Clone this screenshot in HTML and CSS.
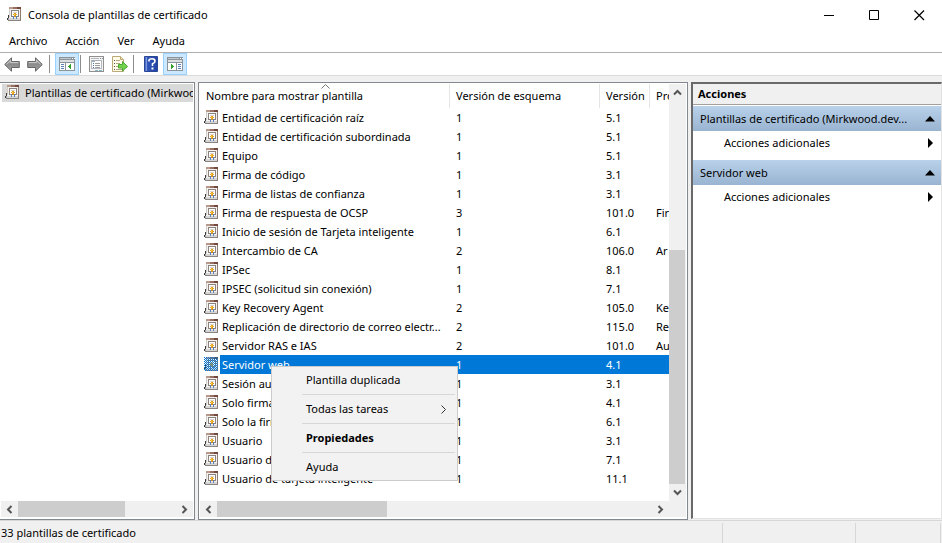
FILE: index.html
```html
<!DOCTYPE html>
<html lang="es">
<head>
<meta charset="utf-8">
<title>Consola de plantillas de certificado</title>
<link rel="stylesheet" href="styles.css">
</head>
<body>
<svg class="defs" aria-hidden="true">
  <defs>
    <linearGradient id="grey" x1="0" x2="0" y1="0" y2="1"><stop offset="0" stop-color="#b4b4b4"/><stop offset=".5" stop-color="#8c8c8c"/><stop offset="1" stop-color="#a4a4a4"/></linearGradient>
    <linearGradient id="blue" x1="0" x2="1" y1="0" y2="0"><stop offset="0" stop-color="#5b7bd0"/><stop offset=".25" stop-color="#2f54b8"/><stop offset="1" stop-color="#2444a4"/></linearGradient>
    <symbol id="cert" viewBox="0 0 14 14">
      <path d="M2 1h11v12H2z" fill="#f3f2f1"/>
      <path d="M2 0h4v2H2z" fill="#b8998c"/>
      <path d="M6 0h4v2H6z" fill="#977063"/>
      <path d="M10 0h4v2h-4z" fill="#74493d"/>
      <path d="M13 2h1v12h-1z" fill="#8d7b74"/>
      <path d="M2 2h1v8H2z" fill="#d2ccc9"/>
      <path d="M1 13h13v1H1z" fill="#8a8481"/>
      <path d="M2 11h11v2H2z" fill="#d5d5d5"/>
      <path d="M1 8h1v3H1zM0 11h1v2H0z" fill="#3c3c3c"/>
      <path d="M1 11h1v2H1z" fill="#a8a8a8"/>
      <path d="M4 3h8v1H4zM4 4h1v6H4zM11 4h1v6h-1zM5 9h6v1H5z" fill="#8b827e"/>
      <path d="M5 4h6v5H5z" fill="#fff"/>
      <path d="M6 5h4v1H6z" fill="#d8d2ce"/>
      <path d="M7 6h2v3H7zM6 7h4v1H6z" fill="#e5a21c"/>
      <path d="M7 7h1v1H7z" fill="#ffd65c"/>
      <path d="M6 9h1v3H6zM9 9h1v3H9z" fill="#5c7fb8"/>
      <path d="M7 9h2v1H7z" fill="#c58c25"/>
    </symbol>
    <symbol id="stipple" viewBox="0 0 14 14">
      <g fill="none" stroke="#0078d7" stroke-dasharray="1 1">
        <path d="M0 .5h14M0 2.500h14M0 4.500h14M0 6.500h14M0 8.500h14M0 10.500h14M0 12.500h14"/>
        <path d="M1 1.500h13M1 3.500h13M1 5.500h13M1 7.500h13M1 9.500h13M1 11.500h13M1 13.500h13"/>
      </g>
    </symbol>
    <symbol id="arrow" viewBox="0 0 16 15">
      <path d="M.7 7.500 7.500.8v3.700h7.800v6H7.500v3.700z" fill="url(#grey)" stroke="#666" stroke-width="1"/>
      <path d="M2.300 7.500 6.600 3.200v2.300h7.600" fill="none" stroke="#c8c8c8"/>
    </symbol>
    <symbol id="chev" viewBox="0 0 9 9">
      <path d="M6.500 1 3 4.500 6.500 8" fill="none" stroke="#555" stroke-width="2"/>
    </symbol>
  </defs>
</svg>
<div class="window">
  <header class="titlebar">
    <svg class="cert"><use href="#cert"/></svg>
    <h1>Consola de plantillas de certificado</h1>
    <div class="caption">
      <button aria-label="Minimizar"><svg width="11" height="11"><path d="M0 5.500h10" stroke="#000"/></svg></button>
      <button aria-label="Maximizar"><svg width="11" height="11"><path d="M.5.500h9v9h-9z" fill="none" stroke="#000"/></svg></button>
      <button aria-label="Cerrar"><svg width="11" height="11"><path d="M.5.500l9.500 9.500M10 .500.500 10" stroke="#000" stroke-width="1.200"/></svg></button>
    </div>
  </header>
  <nav class="menubar">
    <button>Archivo</button><button>Acción</button><button>Ver</button><button>Ayuda</button>
  </nav>
  <div class="toolbar">
    <button class="tool" aria-label="Atrás"><svg width="16" height="15"><use href="#arrow"/></svg></button>
    <button class="tool" aria-label="Adelante"><svg class="flip" width="16" height="15"><use href="#arrow"/></svg></button>
    <span class="sep"></span>
    <button class="tool on" aria-label="Mostrar u ocultar árbol de consola"><svg width="16" height="14" shape-rendering="crispEdges">
      <path d="M0 0h16v14H0z" fill="#8c949b"/><path d="M1 1h11v1H1z" fill="#c3c8cc"/><path d="M13 1h1v1h-1zM15 1h1v1h-1z" fill="#fff"/><path d="M1 3h14v2H1z" fill="#dde0e2"/><path d="M1 6h5v7H1zM7 6h8v7H7z" fill="#fff"/><path d="M2 7h3v1H2zM2 9h3v1H2zM2 11h3v1H2z" fill="#5c80b5"/><path d="M12 7v5h-1v-1h-1v-1H9V9h1V8h1V7z" fill="#33a02c"/></svg></button>
    <span class="sep"></span>
    <button class="tool" aria-label="Propiedades"><svg width="16" height="16" shape-rendering="crispEdges">
      <path d="M.5.500h14v15H.5z" fill="#f4f4f4" stroke="#909090"/><path d="M2 2h8v1H2z" fill="#b8b8b8"/><path d="M11 2h1v1h-1zM13 2h1v1h-1z" fill="#888"/><path d="M2.500 4.500h10v8h-10z" fill="#fff" stroke="#b5b9bd"/><path d="M3 4h3v2H3zM7 4h3v1H7z" fill="#a3adb8"/><path d="M4 7h1v1H4zM4 9h1v1H4zM4 11h1v1H4z" fill="#4b73ad"/><path d="M6 7h5v1H6zM6 9h5v1H6zM6 11h5v1H6z" fill="#9b9b9b"/><path d="M6 14h3v1H6zM10 14h3v1h-3z" fill="#85b9c9"/></svg></button>
    <button class="tool" aria-label="Exportar lista"><svg width="17" height="16">
      <path d="M1.500.500h8l3 3v12h-11z" fill="#fffbe6" stroke="#b9aa78"/><path d="M9.500.500v3h3" fill="#eee0aa" stroke="#b9aa78"/><path d="M3 4h1v1H3zM3 7h1v1H3zM3 10h1v1H3zM3 13h1v1H3z" fill="#555"/><path d="M5 4h4v1H5zM5 7h4v1H5zM5 10h3v1H5zM5 13h6v1H5z" fill="#b0a783"/><path d="M7.500 8.500h4v-3l5 5-5 4.500v-3h-4z" fill="#72d34c" stroke="#49a832"/></svg></button>
    <span class="sep"></span>
    <button class="tool help" aria-label="Ayuda"><svg width="14" height="16">
      <path d="M.5.500h13v15H.5z" fill="url(#blue)" stroke="#2a4796"/><path d="M2.500 1v14" stroke="#7d99de"/><path d="M5 5.500V4Q5.500 2.800 8 2.800 11 2.800 11 5.200 11 6.700 8.500 7.800V10" fill="none" stroke="#fff" stroke-width="1.600"/><path d="M7.500 11.500h2v2h-2z" fill="#fff"/></svg></button>
    <button class="tool on" aria-label="Mostrar u ocultar panel de acciones"><svg width="16" height="14" shape-rendering="crispEdges">
      <path d="M0 0h16v14H0z" fill="#8c949b"/><path d="M1 1h11v1H1z" fill="#c3c8cc"/><path d="M13 1h1v1h-1zM15 1h1v1h-1z" fill="#fff"/><path d="M1 3h14v2H1z" fill="#dde0e2"/><path d="M1 6h8v7H1zM10 6h5v7h-5z" fill="#fff"/><path d="M11 7h3v1h-3zM11 9h3v1h-3zM11 11h3v1h-3z" fill="#5c80b5"/><path d="M4 7v5h1v-1h1v-1h1V9H6V8H5V7z" fill="#33a02c"/></svg></button>
  </div>
  <main class="panes">
    <section class="pane tree">
      <div class="content"><a class="node" href="#lista"><svg class="cert"><use href="#cert"/></svg><span>Plantillas de certificado (Mirkwood)</span></a></div>
      <div class="hbar"><button aria-label="Izquierda"><svg width="9" height="9"><use href="#chev"/></svg></button><div class="track"><i class="thumb"></i></div><button aria-label="Derecha"><svg class="flip" width="9" height="9"><use href="#chev"/></svg></button></div>
    </section>
    <section class="pane list" id="lista">
      <div class="content">
        <table>
          <colgroup><col class="c1"><col class="c2"><col class="c3"><col></colgroup>
          <thead><tr><th>Nombre para mostrar plantilla<svg class="sort" width="9" height="5"><path d="M.5 4.500l4-4 4 4" fill="none" stroke="#777"/></svg></th><th>Versión de esquema</th><th>Versión</th><th>Pro</th></tr></thead>
          <tbody>
            <tr><td><svg class="cert"><use href="#cert"/></svg><span>Entidad de certificación raíz</span></td><td>1</td><td>5.1</td><td></td></tr>
            <tr><td><svg class="cert"><use href="#cert"/></svg><span>Entidad de certificación subordinada</span></td><td>1</td><td>5.1</td><td></td></tr>
            <tr><td><svg class="cert"><use href="#cert"/></svg><span>Equipo</span></td><td>1</td><td>5.1</td><td></td></tr>
            <tr><td><svg class="cert"><use href="#cert"/></svg><span>Firma de código</span></td><td>1</td><td>3.1</td><td></td></tr>
            <tr><td><svg class="cert"><use href="#cert"/></svg><span>Firma de listas de confianza</span></td><td>1</td><td>3.1</td><td></td></tr>
            <tr><td><svg class="cert"><use href="#cert"/></svg><span>Firma de respuesta de OCSP</span></td><td>3</td><td>101.0</td><td>Fir</td></tr>
            <tr><td><svg class="cert"><use href="#cert"/></svg><span>Inicio de sesión de Tarjeta inteligente</span></td><td>1</td><td>6.1</td><td></td></tr>
            <tr><td><svg class="cert"><use href="#cert"/></svg><span>Intercambio de CA</span></td><td>2</td><td>106.0</td><td>Ar</td></tr>
            <tr><td><svg class="cert"><use href="#cert"/></svg><span>IPSec</span></td><td>1</td><td>8.1</td><td></td></tr>
            <tr><td><svg class="cert"><use href="#cert"/></svg><span>IPSEC (solicitud sin conexión)</span></td><td>1</td><td>7.1</td><td></td></tr>
            <tr><td><svg class="cert"><use href="#cert"/></svg><span>Key Recovery Agent</span></td><td>2</td><td>105.0</td><td>Ke</td></tr>
            <tr><td><svg class="cert"><use href="#cert"/></svg><span>Replicación de directorio de correo electr...</span></td><td>2</td><td>115.0</td><td>Re</td></tr>
            <tr><td><svg class="cert"><use href="#cert"/></svg><span>Servidor RAS e IAS</span></td><td>2</td><td>101.0</td><td>Au</td></tr>
            <tr class="selected"><td><svg class="cert"><use href="#cert"/><use href="#stipple"/></svg><span>Servidor web</span></td><td>1</td><td>4.1</td><td></td></tr>
            <tr><td><svg class="cert"><use href="#cert"/></svg><span>Sesión autenticada</span></td><td>1</td><td>3.1</td><td></td></tr>
            <tr><td><svg class="cert"><use href="#cert"/></svg><span>Solo firma</span></td><td>1</td><td>4.1</td><td></td></tr>
            <tr><td><svg class="cert"><use href="#cert"/></svg><span>Solo la firma</span></td><td>1</td><td>6.1</td><td></td></tr>
            <tr><td><svg class="cert"><use href="#cert"/></svg><span>Usuario</span></td><td>1</td><td>3.1</td><td></td></tr>
            <tr><td><svg class="cert"><use href="#cert"/></svg><span>Usuario de</span></td><td>1</td><td>7.1</td><td></td></tr>
            <tr><td><svg class="cert"><use href="#cert"/></svg><span>Usuario de tarjeta inteligente</span></td><td>1</td><td>11.1</td><td></td></tr>
          </tbody>
        </table>
      </div>
      <div class="vbar"><button aria-label="Arriba"><svg class="up" width="9" height="9"><use href="#chev"/></svg></button><div class="track"><i class="thumb"></i></div><button aria-label="Abajo"><svg class="down" width="9" height="9"><use href="#chev"/></svg></button></div>
      <div class="hbar"><button aria-label="Izquierda"><svg width="9" height="9"><use href="#chev"/></svg></button><div class="track"><i class="thumb"></i></div><button aria-label="Derecha"><svg class="flip" width="9" height="9"><use href="#chev"/></svg></button></div>
      <div class="context" role="menu">
        <button role="menuitem">Plantilla duplicada</button><hr>
        <button role="menuitem">Todas las tareas<svg width="5" height="9"><path d="M.5.500l4 4-4 4" fill="none" stroke="#333"/></svg></button><hr>
        <button role="menuitem" class="strong">Propiedades</button><hr>
        <button role="menuitem">Ayuda</button>
      </div>
    </section>
    <aside class="actions">
      <h2>Acciones</h2>
      <button class="group"><span>Plantillas de certificado (Mirkwood.dev...</span><svg width="10" height="6"><path d="M0 5.500h10L5 0z"/></svg></button>
      <button class="more"><span>Acciones adicionales</span><svg width="10" height="10"><path d="M3 0v10l5-5z"/></svg></button>
      <button class="group"><span>Servidor web</span><svg width="10" height="6"><path d="M0 5.500h10L5 0z"/></svg></button>
      <button class="more"><span>Acciones adicionales</span><svg width="10" height="10"><path d="M3 0v10l5-5z"/></svg></button>
    </aside>
  </main>
  <footer class="status"><span>33 plantillas de certificado</span><span></span><span></span></footer>
</div>
</body>
</html>
```
FILE: styles.css
```css
* { box-sizing: border-box; }
html, body { height: 100%; margin: 0; }
body {
  background: #fff;
  color: #000;
  font: 11px/16px "Noto Sans", "Open Sans", sans-serif;
  overflow: hidden;
}
button {
  border: 0;
  padding: 0;
  margin: 0;
  background: none;
  font: inherit;
  color: inherit;
  text-align: left;
}
svg { display: block; flex: none; }
.defs { position: absolute; width: 0; height: 0; }
.cert { width: 14px; height: 14px; margin-bottom: 2px; }
td .cert { margin-bottom: 1px; }
.flip { transform: scaleX(-1); }
.up { transform: rotate(90deg); }
.down { transform: rotate(-90deg); }

.window { display: flex; flex-direction: column; height: 100vh; }

.titlebar { display: flex; align-items: center; height: 30px; padding-left: 7px; }
.titlebar h1 { margin: 0 0 0 7px; font-size: 11px; font-weight: 400; flex: 1; }
.caption { display: flex; align-self: stretch; }
.caption button { width: 45px; display: flex; align-items: center; justify-content: center; }

.menubar { display: flex; gap: 18px; height: 22px; padding: 0 9px; align-items: center; }

.toolbar {
  display: flex;
  align-items: center;
  height: 24px;
  padding: 0 4px;
  border-top: 1px solid #b0b0b0;
  border-bottom: 1px solid #dadada;
}
.tool { display: flex; align-items: center; justify-content: center; height: 22px; width: 23px; }
.tool:first-child { width: 16px; margin-right: 3px; }
.tool.on { width: 24px; height: 22px; background: #cce8ff; border: 1px solid #99d1ff; }
.tool.help { width: 25px; }
.sep { width: 1px; height: 18px; background: #8d8d8d; margin: 0 5px 0 3px; }
.tool.on + .sep { margin: 0 4px 0 1px; }
.tool + .sep:nth-last-child(3) { margin: 0 4px 0 2px; }

.panes {
  flex: 1;
  min-height: 0;
  display: grid;
  grid-template-columns: 195px minmax(0, 1fr) 251px;
  gap: 3px;
  padding-top: 6px;
  background: #f0f0f0;
}
.pane {
  position: relative;
  display: grid;
  grid-template-columns: minmax(0, 1fr) auto;
  grid-template-rows: minmax(0, 1fr) 16px;
  padding: 1px 1px 2px;
  background: #fff;
  border: 1px solid #828790;
}
.tree { border-left: 0; }
.content { min-width: 0; overflow: hidden; }
.node {
  display: flex;
  align-items: center;
  gap: 6px;
  height: 18px;
  margin-left: 1px;
  padding-left: 3px;
  overflow: hidden;
  background: #d9d9d9;
  color: inherit;
  text-decoration: none;
  white-space: nowrap;
}

.hbar, .vbar { display: flex; background: #f0f0f0; }
.hbar { grid-column: 1 / -1; }
.list .hbar { padding-right: 17px; }
.vbar { flex-direction: column; width: 17px; }
.hbar button, .vbar button { display: flex; align-items: center; justify-content: center; width: 17px; height: 16px; }
.vbar button { height: 17px; }
.track { flex: 1; display: flex; }
.vbar .track { flex-direction: column; justify-content: flex-end; }
.thumb { background: #cdcdcd; }
.hbar .thumb { width: 107px; }
.list .hbar .thumb { width: 170px; }
.vbar .thumb { height: 61%; margin-right: 1px; }

table { width: 100%; table-layout: fixed; border-spacing: 0; }
.c1 { width: 250px; }
.c2 { width: 150px; }
.c3 { width: 50px; }
th, td { padding: 0 0 0 6px; text-align: left; font-weight: 400; white-space: nowrap; overflow: hidden; }
th { position: relative; height: 24px; border-right: 1px solid #e5e5e5; }
th:last-child { border-right: 0; }
.sort { position: absolute; top: 0; left: calc(50% - 4px); }
td { height: 19px; line-height: 19px; }
td:first-child { display: flex; align-items: center; padding-left: 4px; gap: 2px; }
td span { padding: 0 2px; }
.selected { color: #fff; background: linear-gradient(to right, #fff 20px, #0078d7 20px); }

.context {
  position: absolute;
  top: 283px;
  left: 72px;
  width: 187px;
  padding: 2px;
  background: #f2f2f2;
  border: 1px solid #ccc;
}
.context button { display: flex; align-items: center; justify-content: space-between; width: 100%; height: 22px; padding: 0 9px 0 32px; }
.context hr { margin: 3px 0 3px 28px; border: 0; height: 1px; background: #d7d7d7; }
.context .strong { font-weight: 700; }

.actions { background: #fff; border: 2px solid #696969; border-right: 1px solid #e3e3e3; border-bottom: 1px solid #e3e3e3; margin-bottom: 1px; }
.actions h2 { margin: 0 0 1px; padding: 0 5px; font-size: 11px; line-height: 20px; background: #f0f0f0; border-bottom: 1px solid #a0a0a0; }
.actions button { display: flex; align-items: center; justify-content: space-between; width: 100%; padding: 0 6px 0 7px; }
.actions .group { height: 25px; background: linear-gradient(#b9d1ea, #99b4d1); }
.actions .more { height: 24px; padding-left: 31px; margin-bottom: 5px; }

.status {
  display: grid;
  grid-template-columns: minmax(0, 1fr) 133px 85px;
  height: 23px;
  padding: 2px 1px 2px 0;
  background: #f0f0f0;
  border-top: 1px solid #d7d7d7;
}
.status span { padding-left: 1px; line-height: 20px; border-right: 1px solid #d7d7d7; }
```
